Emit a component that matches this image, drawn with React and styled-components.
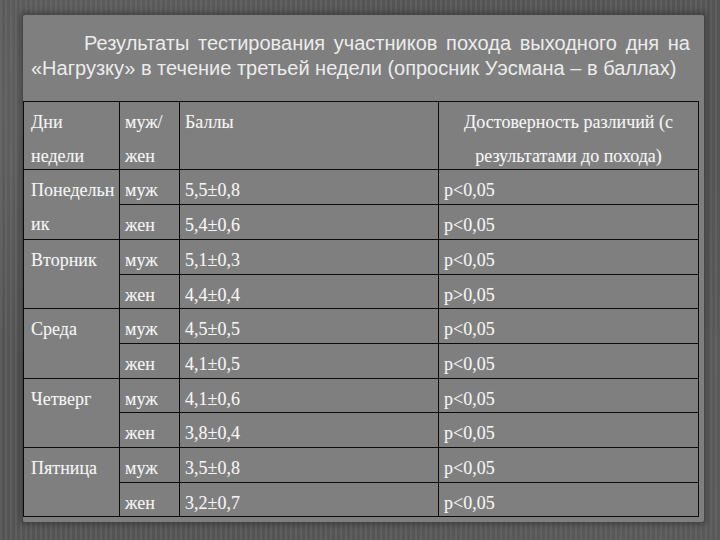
import React from 'react'
import styled, { createGlobalStyle } from 'styled-components'

const Global = createGlobalStyle`
  html, body {
    margin: 0;
    padding: 0;
  }
  body {
    width: 720px;
    height: 540px;
    overflow: hidden;
    background-color: rgb(88,88,88);
    background-image:
      radial-gradient(ellipse at 10% 20%, rgba(120,120,120,.35), rgba(0,0,0,0) 40%),
      radial-gradient(ellipse at 90% 80%, rgba(110,110,110,.3), rgba(0,0,0,0) 45%),
      repeating-linear-gradient(90deg, rgba(255,255,255,.04) 0 2px, rgba(0,0,0,.05) 2px 5px);
  }
`

const Page = styled.div`
  width: 720px;
  height: 540px;
  box-sizing: border-box;
  padding: 15px 16px 18px 23px;
`

const Sheet = styled.div`
  height: 100%;
  box-sizing: border-box;
  padding-top: 16px;
  background-color: rgb(127,127,127);
  box-shadow: 0 0 5px 3px rgba(50,50,50,.55);
  border-radius: 2px;
`

const Title = styled.p`
  margin: 0 14px 20px 8px;
  font-family: 'Liberation Sans', Arial, sans-serif;
  font-size: 20px;
  line-height: 25px;
  color: rgb(236,236,236);
  text-align: justify;
  text-align-last: left;
  text-indent: 53px;
`

const Table = styled.table`
  width: 675px;
  border-collapse: collapse;
  table-layout: fixed;
  font-family: 'Liberation Serif', 'Times New Roman', serif;
  font-size: 18px;
  color: rgb(244,244,244);
`

const Cell = styled.td`
  border: 1px solid rgb(12,12,12);
  vertical-align: top;
  padding: 4px ${p => (p.$first ? '7px' : '5px')} 0;
  text-align: ${p => (p.$center ? 'center' : 'left')};
  line-height: 33.7px;
  white-space: nowrap;
  text-shadow: 0 0 1px rgba(255,255,255,.25);
`

const Lines = styled.div`
  margin-bottom: -4px;
`

const rows = [
  { day: <>Понедельн<br />ик</>, m: '5,5±0,8', mp: 'p<0,05', f: '5,4±0,6', fp: 'p<0,05' },
  { day: 'Вторник', m: '5,1±0,3', mp: 'p<0,05', f: '4,4±0,4', fp: 'p>0,05' },
  { day: 'Среда', m: '4,5±0,5', mp: 'p<0,05', f: '4,1±0,5', fp: 'p<0,05' },
  { day: 'Четверг', m: '4,1±0,6', mp: 'p<0,05', f: '3,8±0,4', fp: 'p<0,05' },
  { day: 'Пятница', m: '3,5±0,8', mp: 'p<0,05', f: '3,2±0,7', fp: 'p<0,05' }
]

export default function App() {
  return (
    <>
      <Global />
      <Page>
        <Sheet>
          <Title>
            Результаты тестирования участников похода выходного дня на «Нагрузку» в течение третьей недели (опросник Уэсмана – в баллах)
          </Title>
          <Table>
            <colgroup>
              <col style={{ width: 96 }} />
              <col style={{ width: 60 }} />
              <col style={{ width: 259 }} />
              <col style={{ width: 260 }} />
            </colgroup>
            <tbody>
              <tr>
                <Cell $first><Lines>Дни<br />недели</Lines></Cell>
                <Cell><Lines>муж/<br />жен</Lines></Cell>
                <Cell><Lines>Баллы</Lines></Cell>
                <Cell $center><Lines>Достоверность различий (с<br />результатами до похода)</Lines></Cell>
              </tr>
              {rows.map((r, i) => (
                <React.Fragment key={i}>
                  <tr>
                    <Cell $first rowSpan={2}><Lines>{r.day}</Lines></Cell>
                    <Cell><Lines>муж</Lines></Cell>
                    <Cell><Lines>{r.m}</Lines></Cell>
                    <Cell><Lines>{r.mp}</Lines></Cell>
                  </tr>
                  <tr>
                    <Cell><Lines>жен</Lines></Cell>
                    <Cell><Lines>{r.f}</Lines></Cell>
                    <Cell><Lines>{r.fp}</Lines></Cell>
                  </tr>
                </React.Fragment>
              ))}
            </tbody>
          </Table>
        </Sheet>
      </Page>
    </>
  )
}
